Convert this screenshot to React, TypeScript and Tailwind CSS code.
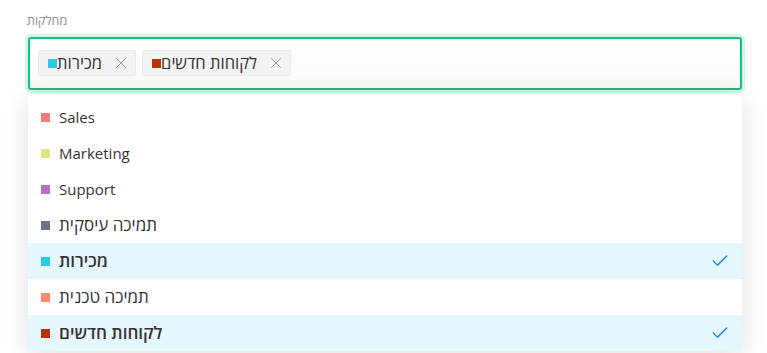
import React from "react";
import { Check, X } from "lucide-react";

type Option = { label: string; color: string; he?: boolean; selected?: boolean };

const options: Option[] = [
  { label: "Sales", color: "bg-[#f47c7c]" },
  { label: "Marketing", color: "bg-[#dce57c]" },
  { label: "Support", color: "bg-[#b96bc6]" },
  { label: "תמיכה עיסקית", color: "bg-[#6b7189]", he: true },
  { label: "מכירות", color: "bg-[#2ccde4]", he: true, selected: true },
  { label: "תמיכה טכנית", color: "bg-[#ff8a6c]", he: true },
  { label: "לקוחות חדשים", color: "bg-[#b8300c]", he: true, selected: true },
];

const tags = options.filter((o) => o.selected);

export default function App() {
  return (
    <div className="h-[353px] w-[767px] overflow-hidden bg-white font-['Open_Sans','Liberation_Sans',sans-serif]">
      <div className="w-[714px] ml-[28px] pt-[12px]">
        {/* Label */}
        <div className="mb-[7px] -ml-[1px] text-[12.5px] leading-[18px] text-[#8c8c8c]">מחלקות</div>

        {/* Select input */}
        <div className="flex h-[53px] items-start gap-[6px] rounded-[3px] border-2 border-[#17bf7f] bg-gradient-to-b from-white to-[#fafafb] pl-[8px] pt-[11px] shadow-[0_0_0_3px_rgba(23,191,127,0.18)]">
          {tags.map((t) => (
            <div
              key={t.label}
              className="flex h-[26px] items-center rounded-[2px] border border-[#ebebeb] bg-[#f3f3f3] pl-[9px] pr-[5px] text-[16.5px] text-[#333]"
            >
              <span className={`h-[9px] w-[9px] ${t.color}`}></span>
              <span className="leading-none">{t.label}</span>
              <X size={18} strokeWidth={1.3} className="ml-[10px] text-[#9a9a9a]" />
            </div>
          ))}
        </div>

        {/* Dropdown */}
        <div className="mt-[5px] bg-white pt-[4px] shadow-[0_4px_24px_rgba(0,0,0,0.12)]">
          {options.map((o) => (
            <div
              key={o.label}
              className={`flex h-[36px] items-center pl-[13px] pr-[12px] text-[#333] ${
                o.he ? "text-[17px]" : "text-[15px]"
              } ${o.selected ? "bg-[#e5f6ff] font-semibold" : ""}`}
            >
              <span className={`h-[9px] w-[9px] ${o.color}`}></span>
              <span className="ml-[9px] flex-1">{o.label}</span>
              {o.selected && <Check size={20} strokeWidth={1.8} className="text-[#1d8ff5]" />}
            </div>
          ))}
        </div>
      </div>
    </div>
  );
}
